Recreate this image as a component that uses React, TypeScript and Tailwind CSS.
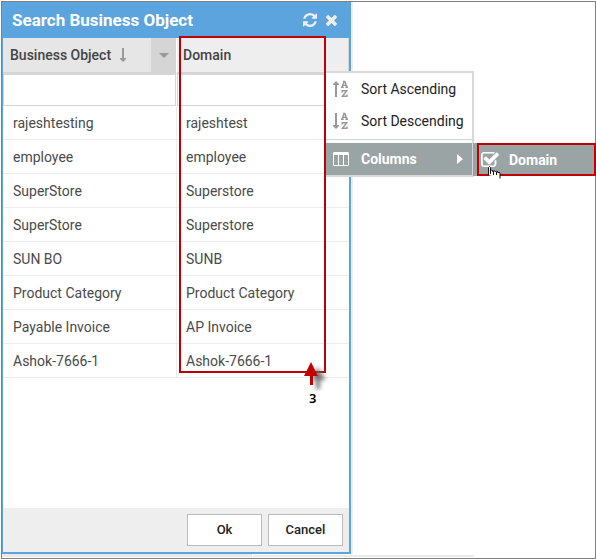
import React from 'react';

const rows = [
  ['rajeshtesting', 'rajeshtest'],
  ['employee', 'employee'],
  ['SuperStore', 'Superstore'],
  ['SuperStore', 'Superstore'],
  ['SUN BO', 'SUNB'],
  ['Product Category', 'Product Category'],
  ['Payable Invoice', 'AP Invoice'],
  ['Ashok-7666-1', 'Ashok-7666-1'],
];

function RefreshIcon() {
  return (
    <svg viewBox="128 128 1536 1536" className="h-[14px] w-[14px]" fill="currentColor" aria-hidden="true">
      <path d="M1639 1056q0 5-1 7-64 268-268 434.5T892 1664q-146 0-282.5-55T366 1452l-129 129q-19 19-45 19t-45-19-19-45v-448q0-26 19-45t45-19h448q26 0 45 19t19 45-19 45l-137 137q71 66 161 102t187 36q134 0 250-65t186-179q11-17 53-117 8-23 30-23h192q13 0 22.5 9.5t9.5 22.5zm25-800v448q0 26-19 45t-45 19h-448q-26 0-45-19t-19-45 19-45l138-138Q1097 384 896 384q-134 0-250 65T460 628q-11 17-53 117-8 23-30 23H178q-13 0-22.5-9.5T146 736v-7q65-268 270-434.5T896 128q146 0 284 55.5T1425 340l130-129q19-19 45-19t45 19 19 45z" />
    </svg>
  );
}

function CloseIcon() {
  return (
    <svg viewBox="302 366 1188 1188" className="h-[11px] w-[11px]" fill="currentColor" aria-hidden="true">
      <path d="M1490 1322q0 40-28 68l-136 136q-28 28-68 28t-68-28l-294-294-294 294q-28 28-68 28t-68-28l-136-136q-28-28-28-68t28-68l294-294-294-294q-28-28-28-68t28-68l136-136q28-28 68-28t68 28l294 294 294-294q28-28 68-28t68 28l136 136q28 28 28 68t-28 68l-294 294 294 294q28 28 28 68z" />
    </svg>
  );
}

function CheckIcon() {
  return (
    <svg viewBox="64 128 1664 1408" className="h-[15px] w-[18px]" fill="currentColor" aria-hidden="true">
      <path stroke="currentColor" strokeWidth="50" d="M1472 930v318q0 119-84.500 203.500T1184 1536H352q-119 0-203.500-84.500T64 1248V416q0-119 84.500-203.500T352 128h832q63 0 117 25 15 7 18 23 3 17-9 29l-49 49q-10 10-23 10-3 0-9-2-23-6-45-6H352q-66 0-113 47t-47 113v832q0 66 47 113t113 47h832q66 0 113-47t47-113V994q0-13 9-22l64-64q10-10 23-10 6 0 12 3 20 8 20 29zm231-489l-814 814q-24 24-57 24t-57-24L345 825q-24-24-24-57t24-57l110-110q24-24 57-24t57 24l263 263 647-647q24-24 57-24t57 24l110 110q24 24 24 57t-24 57z" />
    </svg>
  );
}

function SortIcon({ up = false }: { up?: boolean }) {
  return (
    <svg viewBox="0 0 16 18" className="h-[18px] w-4 shrink-0" aria-hidden="true">
      <path fill="#999" d={up ? 'M2 17V5H0V4L3 1l3 3v1H4v12z' : 'M2 1v12H0v1l3 3 3-3v-1H4V1z'} />
      <g fill="none" stroke="#999" strokeWidth="1.4">
        <path d="M9 7l2.200-5.500h.6L14 7M9.800 5.300h3.400M8 7.300h2.800M12.300 7.300H15M10 1.400h2" />
        <path d="M9.200 12.500v-1.800h4.600L9.400 16.300h4.600v-1.800" />
      </g>
    </svg>
  );
}

function ColumnsIcon() {
  return (
    <svg viewBox="0 0 16 14" className="h-[14px] w-4 shrink-0" aria-hidden="true">
      <path fill="#fff" fillRule="evenodd" d="M1 0h14l1 1v12l-1 1H1l-1-1V1zM1 3v10h4V3zM6 3v10h4V3zM11 3v10h4V3z" />
    </svg>
  );
}

function HandCursor() {
  return (
    <svg viewBox="0 0 14 14" className="absolute top-5 left-2 h-[14px] w-[14px]" aria-hidden="true">
      <path fill="#fff" stroke="#111" d="M1.500 10V2.500l1-1 1 1V6l1-1 1.500 1v1l1-1.500L8.500 7l1-1 1.500 1v1l1-1 1 1v5.500" />
      <path stroke="#111" d="M3.500 5v4M6.500 7v3M9.500 7v3" fill="none" />
    </svg>
  );
}

const menuItem = 'flex h-8 w-full items-center gap-3 pl-[7px] text-left text-sm';

export default function App() {
  return (
    <div className="flex min-h-screen bg-white pt-px pl-px font-[Roboto,sans-serif] text-sm text-[#4a4a4a]">
      <div className="relative flex flex-1 flex-col border border-[#808080] pb-px">
        <div className="flex flex-1">
          <section
            role="dialog"
            aria-label="Search Business Object"
            className="relative flex w-[349px] flex-col border-r-2 border-b-2 border-l border-[#5ba4de] bg-white"
          >
            <header className="flex h-9 items-center bg-[#5ba4de] pr-3 pl-[9px] text-white">
              <h1 className="flex-1 text-[17px] font-bold">Search Business Object</h1>
              <div className="flex items-center gap-[9px] text-[#eee]">
                <button type="button" aria-label="Refresh"><RefreshIcon /></button>
                <button type="button" aria-label="Close"><CloseIcon /></button>
              </div>
            </header>

            <table className="w-full table-fixed border-separate border-spacing-0 text-left">
              <thead>
                <tr className="h-9">
                  <th className="w-[174px] border-r border-b-2 border-r-white border-b-[#d5d5d5] bg-[#e6e6e6] p-0 font-medium text-[#444]">
                    <div className="flex h-[34px] items-center pl-[7px]">
                      <span>Business Object</span>
                      <svg viewBox="0 0 8 14" className="ml-2 h-[14px] w-2" aria-hidden="true">
                        <path fill="#999" d="M3 0h2v10h2v1l-3 3-3-3v-1h2z" />
                      </svg>
                      <button type="button" aria-label="Column options" className="ml-auto flex h-full w-[25px] items-center justify-center bg-[#d5d5d5]">
                        <svg viewBox="0 0 10 5" className="h-[5px] w-[10px]" aria-hidden="true"><path fill="#999" d="M0 0h10L5 5z" /></svg>
                      </button>
                    </div>
                  </th>
                  <th className="border-r border-b-2 border-[#d5d5d5] bg-[#eee] p-0 pl-[6px] font-medium text-[#444]">Domain</th>
                </tr>
                <tr className="h-8">
                  <td className="border-r border-white p-0">
                    <input aria-label="Filter business object" className="block h-8 w-full border border-[#d5d5d5] px-2 outline-none" />
                  </td>
                  <td className="p-0">
                    <input aria-label="Filter domain" className="block h-8 w-full border border-[#d5d5d5] px-2 outline-none" />
                  </td>
                </tr>
              </thead>
              <tbody>
                {rows.map(([name, domain], i) => (
                  <tr key={i} className="h-[34px]">
                    <td className="border-r border-b border-[#ededed] p-0 pl-[10px]">{name}</td>
                    <td className="border-b border-[#ededed] p-0 pl-[9px]">{domain}</td>
                  </tr>
                ))}
              </tbody>
            </table>

            <footer className="mt-auto flex h-11 items-center justify-end gap-[6px] bg-[#eee] pr-[6px] text-[13px] font-medium text-[#222]">
              <button type="button" className="h-8 w-[75px] border border-[#bbb] bg-white">Ok</button>
              <button type="button" className="h-8 w-[75px] border border-[#bbb] bg-white">Cancel</button>
            </footer>

            {/* Highlight around the Domain column, with its numbered callout */}
            <div className="pointer-events-none absolute top-[34px] left-44 z-10 h-[337px] w-[147px] border-2 border-[#c00000]" />
            <div className="pointer-events-none absolute top-[359px] left-[300px] z-20 flex w-[30px] flex-col">
              <svg viewBox="0 0 30 30" className="h-[30px] w-[30px]" aria-hidden="true">
                <path className="blur-[2px]" fill="#666" fillOpacity=".9" d="M14 6l9 13h-6v9h-4v-9H9z" />
                <path fill="#c00000" d="M8 1l7 14h-5v9H7v-9H1z" />
              </svg>
              <span className="pl-[6px] font-['Noto_Sans',sans-serif] text-[13px] leading-[14px] font-semibold text-black">3</span>
            </div>
          </section>

          <div className="w-[2px] bg-[#eee]" />
        </div>
        <div className="flex h-[3px] w-[472px] gap-px">
          <div className="w-[250px] bg-[#eaeaea]" />
          <div className="flex-1 border-t border-white bg-[#eaeaea]" />
        </div>

        {/* Column menu */}
        <div role="menu" className="absolute top-[69px] left-[324px] w-[148px] border-t-2 border-r-2 border-b-2 border-[#d8d8d8] bg-white text-[#222]">
          <button type="button" role="menuitem" className={menuItem}><SortIcon up /><span>Sort Ascending</span></button>
          <button type="button" role="menuitem" className={menuItem}><SortIcon /><span>Sort Descending</span></button>
          <div className="mt-[2px] mb-[3px] h-px bg-[#d5d5d5]" />
          <button type="button" role="menuitem" className={menuItem + ' bg-[#9aa4a4] font-bold text-white'}>
            <ColumnsIcon />
            <span className="flex-1">Columns</span>
            <svg viewBox="0 0 6 10" className="mr-[9px] h-[10px] w-[6px]" aria-hidden="true"><path fill="#fff" d="M0 0l6 5-6 5z" /></svg>
          </button>
        </div>

        {/* Columns submenu */}
        <div className="absolute top-[141px] -right-px left-[471px] flex h-[33px] bg-[#9aa4a4] pl-1">
          <label className="relative flex flex-1 items-center gap-[10px] border-2 border-[#c00000] pl-[2px] font-bold text-white">
            <input type="checkbox" defaultChecked className="sr-only" />
            <CheckIcon />
            <span>Domain</span>
            <HandCursor />
          </label>
        </div>
      </div>
    </div>
  );
}
